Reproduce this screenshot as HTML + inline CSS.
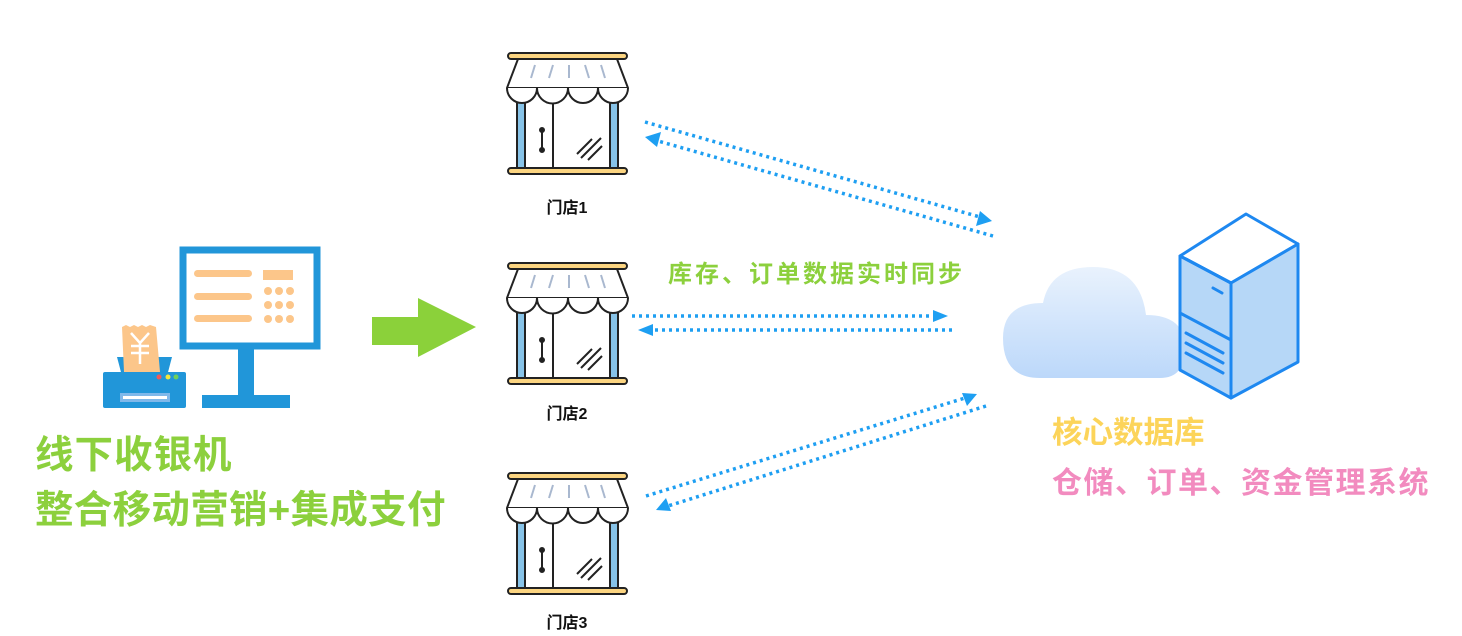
<!DOCTYPE html>
<html><head><meta charset="utf-8"><style>
html,body{margin:0;padding:0;background:#fff;}
svg{display:block}
text{font-family:"Liberation Sans","Noto Sans CJK SC",sans-serif;font-weight:bold}
</style></head><body>
<svg width="1462" height="636" viewBox="0 0 1462 636" xmlns="http://www.w3.org/2000/svg">
<defs>
<g id="store" stroke="#222" stroke-width="2" stroke-linejoin="round">
  <path d="M13,9 L112,9 L123,38 L2,38 Z" fill="#fff"/>
  <g stroke="#a9b8cf" stroke-width="2">
    <line x1="30" y1="15" x2="26" y2="28"/><line x1="48" y1="15" x2="44" y2="28"/>
    <line x1="64" y1="15" x2="64" y2="28"/><line x1="80" y1="15" x2="84" y2="28"/>
    <line x1="96" y1="15" x2="100" y2="28"/>
  </g>
  <rect x="12" y="52" width="8" height="68" fill="#87c3e8"/>
  <rect x="105" y="52" width="8" height="68" fill="#87c3e8"/>
  <line x1="20" y1="52" x2="20" y2="120"/><line x1="105" y1="52" x2="105" y2="120"/>
  <line x1="48" y1="52" x2="48" y2="120"/>
  <path d="M2,38 A15,15 0 0 0 32,38 A15,15 0 0 0 63,38 A15,15 0 0 0 93,38 A15,15 0 0 0 123,38" fill="#fff"/>
  <line x1="37" y1="80" x2="37" y2="100"/>
  <circle cx="37" cy="80" r="2" fill="#222"/><circle cx="37" cy="100" r="2" fill="#222"/>
  <line x1="72" y1="104" x2="87" y2="89"/><line x1="76" y1="108" x2="96" y2="88"/><line x1="83" y1="110" x2="97" y2="96"/>
  <rect x="3" y="3" width="119" height="6" rx="3" fill="#fcd581"/>
  <rect x="3" y="118" width="119" height="6" rx="3" fill="#fcd581"/>
</g>
<linearGradient id="cg" x1="0" y1="0" x2="0" y2="1"><stop offset="0" stop-color="#e9f2fd"/><stop offset="1" stop-color="#bcd8fa"/></linearGradient>
</defs>

<!-- cash register -->
<rect x="183" y="250" width="134" height="96" fill="#fff" stroke="#2196d9" stroke-width="7"/>
<g fill="#fcc68a">
<rect x="194" y="270" width="58" height="7" rx="3.5"/><rect x="194" y="293" width="58" height="7" rx="3.5"/><rect x="194" y="315" width="58" height="7" rx="3.5"/>
<rect x="263" y="270" width="30" height="10"/>
<circle cx="268" cy="291" r="4"/><circle cx="279" cy="291" r="4"/><circle cx="290" cy="291" r="4"/>
<circle cx="268" cy="305" r="4"/><circle cx="279" cy="305" r="4"/><circle cx="290" cy="305" r="4"/>
<circle cx="268" cy="319" r="4"/><circle cx="279" cy="319" r="4"/><circle cx="290" cy="319" r="4"/>
</g>
<rect x="238" y="348" width="16" height="52" fill="#2196d9"/>
<rect x="202" y="395" width="88" height="13" fill="#2196d9"/>
<path d="M117,357 L172,357 L167,376 L122,376 Z" fill="#2196d9"/>
<path d="M122,327 L126,325 L130,327 L134,325 L138,327 L142,325 L146,327 L150,325 L156,327 L160,372 L124,372 Z" fill="#fcc68a"/>
<g stroke="#fff" stroke-width="2.5" fill="none"><path d="M131,333 L140,343 L149,333 M140,343 L140,364 M131,346 L149,346 M131,353 L149,353"/></g>
<rect x="103" y="372" width="83" height="36" rx="2" fill="#2196d9"/>
<rect x="120" y="393" width="50" height="9" fill="#7fb8ea"/><rect x="123" y="396" width="44" height="3" fill="#fff"/>
<circle cx="159" cy="377" r="2.5" fill="#f25a5a"/><circle cx="168" cy="377" r="2.5" fill="#f6e73c"/><circle cx="176" cy="377" r="2.5" fill="#6fd05a"/>

<!-- green arrow -->
<path d="M372,317 L418,317 L418,298 L476,327 L418,357 L418,345 L372,345 Z" fill="#8bd13a"/>

<text x="35" y="468" font-size="38.5" fill="#8cd03d" letter-spacing="1">线下收银机</text>
<text x="35" y="523" font-size="38.5" fill="#8cd03d" letter-spacing="0.3">整合移动营销+集成支付</text>

<use href="#store" transform="translate(505,50)"/>
<use href="#store" transform="translate(505,260)"/>
<use href="#store" transform="translate(505,470)"/>
<text x="567" y="213" font-size="16" fill="#111" text-anchor="middle" font-weight="normal">门店1</text>
<text x="567" y="419" font-size="16" fill="#111" text-anchor="middle" font-weight="normal">门店2</text>
<text x="567" y="628" font-size="16" fill="#111" text-anchor="middle" font-weight="normal">门店3</text>

<text x="668" y="282" font-size="24" fill="#8cd03d" letter-spacing="3">库存、订单数据实时同步</text>

<!-- dotted arrows -->
<g stroke="#1e9ff2" stroke-width="3.5" stroke-dasharray="3 4" fill="none">
<line x1="645" y1="122" x2="980" y2="217"/>
<line x1="993" y1="236" x2="658" y2="141"/>
<line x1="632" y1="316" x2="935" y2="316"/>
<line x1="952" y1="330" x2="650" y2="330"/>
<line x1="646" y1="496" x2="965" y2="398"/>
<line x1="986" y1="406" x2="668" y2="506"/>
</g>
<g fill="#1e9ff2">
<path d="M992,221 L976,226 L980,211 Z"/>
<path d="M645,137 L661,132 L657,147 Z"/>
<path d="M948,316 L933,310 L933,322 Z"/>
<path d="M638,330 L653,324 L653,336 Z"/>
<path d="M977,394 L967,406 L962,393 Z"/>
<path d="M656,510 L666,498 L671,511 Z"/>
</g>

<!-- cloud -->
<path d="M1040,378 Q1003,378 1003,338 Q1003,303 1043,303 Q1050,267 1093,267 Q1140,267 1146,315 Q1185,315 1185,348 Q1185,378 1160,378 Z" fill="url(#cg)"/>

<!-- server -->
<g stroke="#1e88f0" stroke-width="3" stroke-linejoin="round" stroke-linecap="round">
<path d="M1180,256 L1246,214 L1298,244 L1231,283 Z" fill="#fff"/>
<path d="M1180,256 L1231,283 L1231,398 L1180,370 Z" fill="#b6d7f7"/>
<path d="M1231,283 L1298,244 L1298,362 L1231,398 Z" fill="#b6d7f7"/>
<line x1="1180" y1="313" x2="1231" y2="340"/>
<line x1="1213" y1="288" x2="1222" y2="293"/>
<line x1="1186" y1="333" x2="1223" y2="353"/>
<line x1="1186" y1="343" x2="1223" y2="363"/>
<line x1="1186" y1="353" x2="1223" y2="373"/>
<line x1="1186" y1="259" x2="1231" y2="283"/>
</g>

<text x="1052" y="443" font-size="30.5" fill="#fcd45a">核心数据库</text>
<text x="1052" y="493" font-size="30" fill="#f28bbf" letter-spacing="1.5">仓储、订单、资金管理系统</text>
</svg>
</body></html>
